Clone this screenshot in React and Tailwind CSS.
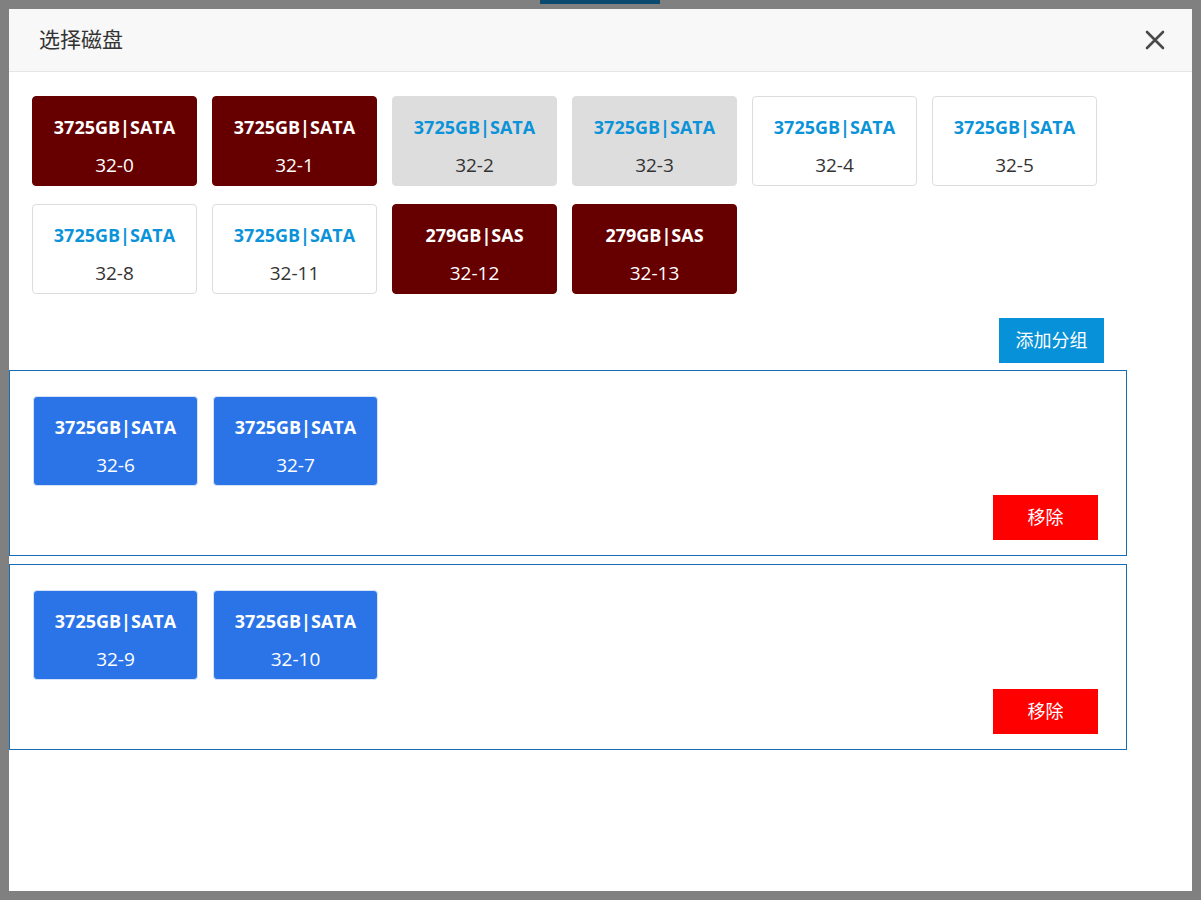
import React from 'react'

const FONT = { fontFamily: '"Open Sans", "Noto Sans CJK SC", sans-serif' }

const CARD_STYLES = {
  used:   { box: 'bg-[#660000] border-[#660000]', title: 'text-white', sub: 'text-white' },
  busy:   { box: 'bg-[#dddddd] border-[#dddddd]', title: 'text-[#0b93d9]', sub: 'text-[#333333]' },
  free:   { box: 'bg-white border-[#dddddd]', title: 'text-[#0b93d9]', sub: 'text-[#333333]' },
  picked: { box: 'bg-[#2a74e8] border-[#d6e2f5]', title: 'text-white', sub: 'text-white' },
}

const DISKS = [
  { cap: '3725GB|SATA', slot: '32-0', type: 'used' },
  { cap: '3725GB|SATA', slot: '32-1', type: 'used' },
  { cap: '3725GB|SATA', slot: '32-2', type: 'busy' },
  { cap: '3725GB|SATA', slot: '32-3', type: 'busy' },
  { cap: '3725GB|SATA', slot: '32-4', type: 'free' },
  { cap: '3725GB|SATA', slot: '32-5', type: 'free' },
  { cap: '3725GB|SATA', slot: '32-8', type: 'free' },
  { cap: '3725GB|SATA', slot: '32-11', type: 'free' },
  { cap: '279GB|SAS', slot: '32-12', type: 'used' },
  { cap: '279GB|SAS', slot: '32-13', type: 'used' },
]

const GROUPS = [
  [{ cap: '3725GB|SATA', slot: '32-6' }, { cap: '3725GB|SATA', slot: '32-7' }],
  [{ cap: '3725GB|SATA', slot: '32-9' }, { cap: '3725GB|SATA', slot: '32-10' }],
]

function DiskCard({ cap, slot, type }) {
  const s = CARD_STYLES[type]
  return (
    <div className={`w-[165px] h-[90px] rounded-[4px] border flex flex-col items-center ${s.box}`}>
      <div className={`mt-[16px] text-[18px] font-bold leading-[28px] ${s.title}`}>{cap}</div>
      <div className={`mt-[10px] text-[19px] leading-[28px] ${s.sub}`}>{slot}</div>
    </div>
  )
}

export default function App() {
  return (
    <div className="relative w-[1201px] h-[900px] bg-[#808080] p-[9px]" style={FONT}>
      {/* strip of the page behind the overlay */}
      <div className="absolute left-[540px] top-0 w-[120px] h-[4px] bg-[#0b4a6e]" />

      <div className="relative h-full bg-white flex flex-col">
        <div className="h-[63px] shrink-0 bg-[#f8f8f8] border-b border-[#e5e5e5] flex items-center justify-between pl-[30px] pr-[27px]">
          <span className="text-[21px] text-[#333333]">选择磁盘</span>
          <svg width="20" height="20" viewBox="0 0 20 20" className="text-[#4a4a4a]">
            <path d="M2 2 L18 18 M18 2 L2 18" stroke="currentColor" strokeWidth="2.6" strokeLinecap="round" />
          </svg>
        </div>

        <div className="pt-[24px] pl-[23px] flex flex-wrap gap-x-[15px] gap-y-[18px] w-[1100px]">
          {DISKS.map(d => <DiskCard key={d.slot} {...d} />)}
        </div>

        <div className="flex justify-end pr-[88px] mt-[24px]">
          <button className="w-[105px] h-[45px] bg-[#0791d8] text-white text-[18px]">添加分组</button>
        </div>

        <div className="mt-[7px] flex flex-col gap-[8px]">
          {GROUPS.map((g, i) => (
            <div key={i} className="w-[1118px] h-[186px] border border-[#1a6ab5] pt-[25px] pl-[23px] pr-[28px] flex flex-col">
              <div className="flex gap-x-[15px]">
                {g.map(d => <DiskCard key={d.slot} {...d} type="picked" />)}
              </div>
              <div className="flex justify-end mt-[9px]">
                <button className="w-[105px] h-[45px] bg-[#ff0000] text-white text-[18px]">移除</button>
              </div>
            </div>
          ))}
        </div>
      </div>
    </div>
  )
}
